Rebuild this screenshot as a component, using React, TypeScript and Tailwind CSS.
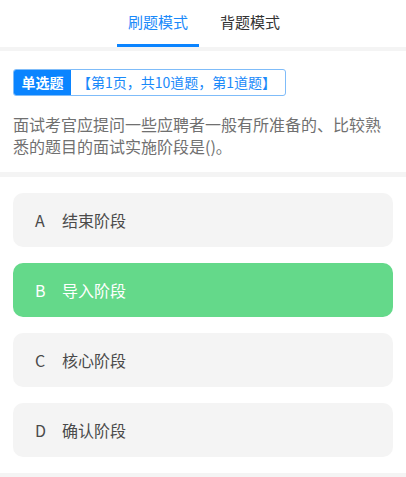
import { useState } from 'react'

const TABS = ['刷题模式', '背题模式'] as const
type Tab = typeof TABS[number]

const OPTIONS = [
  { key: 'A', text: '结束阶段' },
  { key: 'B', text: '导入阶段' },
  { key: 'C', text: '核心阶段' },
  { key: 'D', text: '确认阶段' },
]

export default function App() {
  const [activeTab, setActiveTab] = useState<Tab>('刷题模式')
  const [picked, setPicked] = useState('B')

  return (
    <div
      className="min-h-screen bg-white"
      style={{ fontFamily: '"Noto Sans CJK SC", "Liberation Sans", sans-serif' }}
    >
      {/* Mode tabs */}
      <nav className="h-[47px] flex justify-center gap-[10px] pl-[2px]">
        {TABS.map((tab) => (
          <button
            key={tab}
            onClick={() => setActiveTab(tab)}
            className={`w-[82px] text-[15px] border-b-[3px] pt-[1px] ${
              activeTab === tab
                ? 'border-[#0a84ff] text-[#1989fa]'
                : 'border-transparent text-[#333]'
            }`}
          >
            {tab}
          </button>
        ))}
      </nav>
      <div className="h-[4px] bg-[#f4f4f4]" />

      {/* Question */}
      <section className="px-[13px] pt-[18px] pb-[15px]">
        <div className="flex h-[27px] w-[273px] border border-[#7fbcf9] rounded-[3px] overflow-hidden">
          <span className="w-[57px] bg-[#0a84ff] text-white text-[14px] font-bold flex items-center justify-center">
            单选题
          </span>
          <span className="flex-1 flex items-center pl-[6px] text-[14px] text-[#1989fa] whitespace-nowrap">
            【第1页，共10道题，第1道题】
          </span>
        </div>
        <p className="mt-[17px] text-[16px] leading-[22px] text-[#707070]">
          面试考官应提问一些应聘者一般有所准备的、比较熟悉的题目的面试实施阶段是()。
        </p>
      </section>
      <div className="h-[5px] bg-[#f4f4f4]" />

      {/* Options */}
      <section className="px-[13px] py-[16px] flex flex-col gap-[16px]">
        {OPTIONS.map((opt) => (
          <button
            key={opt.key}
            onClick={() => setPicked(opt.key)}
            className={`h-[54px] rounded-[10px] flex items-center pl-[22px] text-[16px] text-left ${
              picked === opt.key ? 'bg-[#64d98a] text-white' : 'bg-[#f4f4f4] text-[#4a4a4a]'
            }`}
          >
            <span className="w-[27px]">{opt.key}</span>
            <span>{opt.text}</span>
          </button>
        ))}
      </section>
      <div className="h-[4px] bg-[#f4f4f4]" />
    </div>
  )
}
